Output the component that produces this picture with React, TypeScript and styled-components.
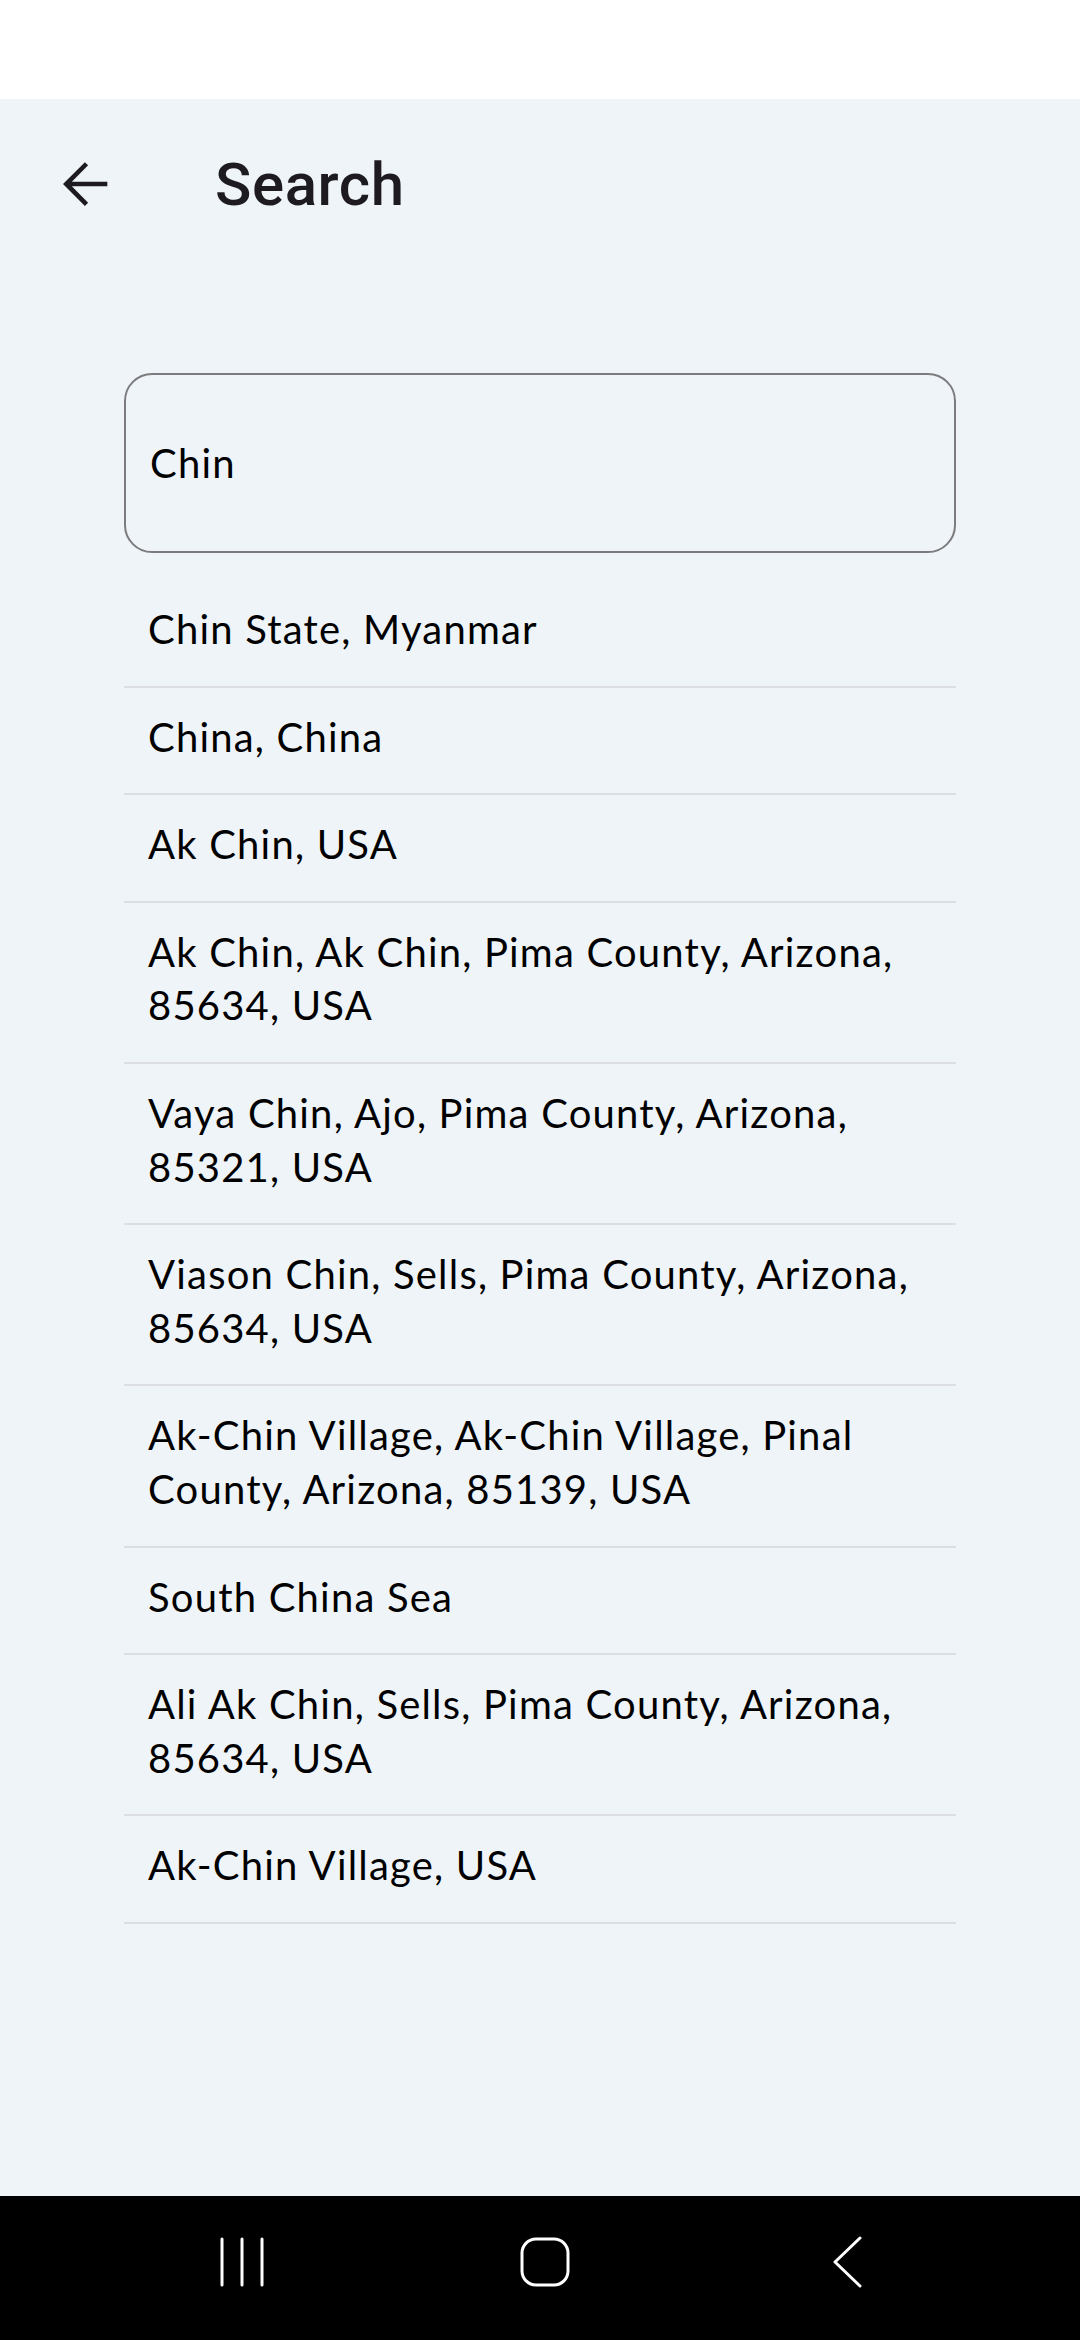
import React from "react";
import styled, { createGlobalStyle } from "styled-components";

const GlobalStyle = createGlobalStyle`
  html, body { margin: 0; padding: 0; background: #eff4f8; }
  * { box-sizing: border-box; }
`;

const Screen = styled.div`
  width: 1080px;
  min-height: 2340px;
  display: flex;
  flex-direction: column;
  background: #eff4f8;
`;

const StatusBar = styled.div`
  height: 99px;
  background: #ffffff;
`;

const Header = styled.header`
  height: 170px;
  display: flex;
  align-items: center;
  padding-left: 49px;
`;

const BackButton = styled.button`
  width: 70px;
  height: 70px;
  padding: 0;
  border: none;
  background: transparent;
  display: flex;
  align-items: center;
  justify-content: center;
  color: #1d1b20;
`;

const Title = styled.h1`
  margin: 0 0 0 96px;
  font-family: Roboto, "Noto Sans", sans-serif;
  font-weight: 500;
  font-size: 60px;
  color: #1d1b20;
  letter-spacing: 0.6px;
`;

const Content = styled.main`
  padding: 104px 124px 0;
  display: flex;
  flex-direction: column;
`;

const SearchField = styled.div`
  height: 180px;
  border: 2px solid #7c7c7e;
  border-radius: 28px;
  display: flex;
  align-items: center;
  padding: 0 24px;
`;

const SearchInput = styled.input`
  width: 100%;
  border: none;
  outline: none;
  background: transparent;
  font-family: Lato, "Noto Sans", sans-serif;
  font-size: 40px;
  letter-spacing: 1.2px;
  color: #000;
  padding: 0;
`;

const ResultList = styled.ul`
  list-style: none;
  margin: 27px 0 0;
  padding: 0;
`;

const ResultItem = styled.li`
  padding: 23px 24px 29px;
  border-bottom: 2px solid #dcdee2;
  font-family: Lato, "Noto Sans", sans-serif;
  font-size: 40px;
  letter-spacing: 1.2px;
  line-height: 53.6px;
  color: #000;
`;

const NavBar = styled.nav`
  margin-top: auto;
  height: 144px;
  background: #000;
  display: flex;
  justify-content: center;
  align-items: center;
  padding: 0 0 12px 10px;
`;

const NavSlot = styled.div`
  width: 303px;
  display: flex;
  justify-content: center;
  align-items: center;
`;

const results = [
  "Chin State, Myanmar",
  "China, China",
  "Ak Chin, USA",
  "Ak Chin, Ak Chin, Pima County, Arizona, 85634, USA",
  "Vaya Chin, Ajo, Pima County, Arizona, 85321, USA",
  "Viason Chin, Sells, Pima County, Arizona, 85634, USA",
  "Ak-Chin Village, Ak-Chin Village, Pinal County, Arizona, 85139, USA",
  "South China Sea",
  "Ali Ak Chin, Sells, Pima County, Arizona, 85634, USA",
  "Ak-Chin Village, USA",
];

export default function App() {
  return (
    <>
      <GlobalStyle />
      <Screen>
        <StatusBar />
        <Header>
          <BackButton aria-label="Back">
            <svg width="70" height="70" viewBox="0 0 24 24" fill="currentColor">
              <path d="M20 11.2H7.83l5.59-5.59L12.3 4.5 4.8 12l7.5 7.5 1.12-1.11L7.83 12.8H20v-1.6z" />
            </svg>
          </BackButton>
          <Title>Search</Title>
        </Header>
        <Content>
          <SearchField>
            <SearchInput defaultValue="Chin" />
          </SearchField>
          <ResultList>
            {results.map((r) => (
              <ResultItem key={r}>{r}</ResultItem>
            ))}
          </ResultList>
        </Content>
        <NavBar>
          <NavSlot>
            <svg width="50" height="52" viewBox="0 0 50 52" fill="none" stroke="#fff" strokeWidth="3" strokeLinecap="round">
              <line x1="5" y1="3" x2="5" y2="49" />
              <line x1="25" y1="3" x2="25" y2="49" />
              <line x1="45" y1="3" x2="45" y2="49" />
            </svg>
          </NavSlot>
          <NavSlot>
            <svg width="52" height="52" viewBox="0 0 52 52" fill="none" stroke="#fff" strokeWidth="3">
              <rect x="3" y="3" width="46" height="46" rx="14" />
            </svg>
          </NavSlot>
          <NavSlot>
            <svg width="32" height="54" viewBox="0 0 32 54" fill="none" stroke="#fff" strokeWidth="3" strokeLinecap="round" strokeLinejoin="round">
              <polyline points="28,3 3,27 28,51" />
            </svg>
          </NavSlot>
        </NavBar>
      </Screen>
    </>
  );
}
